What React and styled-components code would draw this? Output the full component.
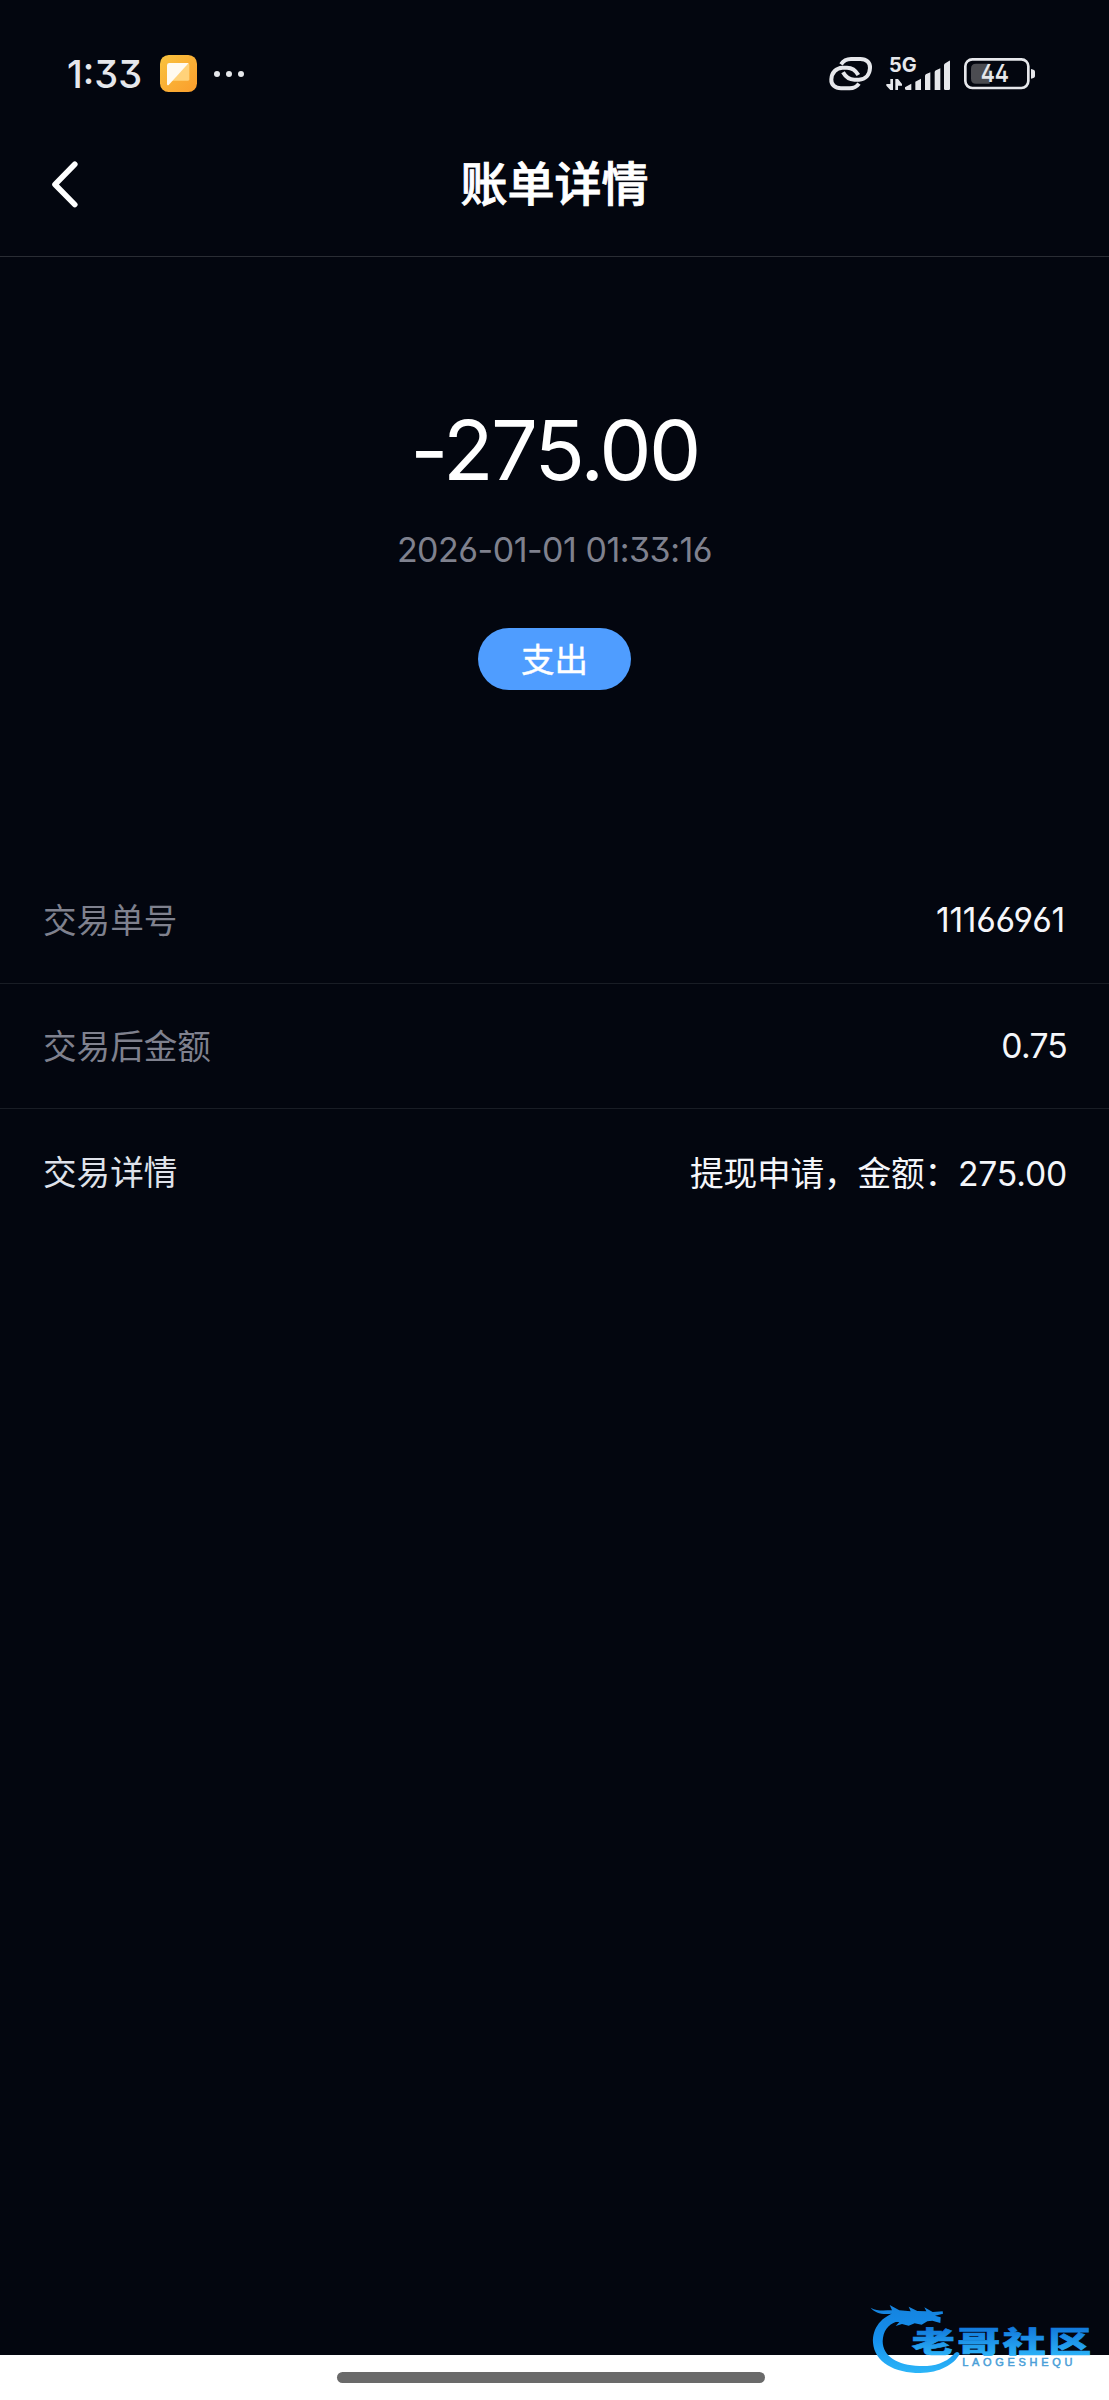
import styled, { createGlobalStyle } from 'styled-components';

const rows = [
  { label: '交易单号', value: '11166961', spacing: '-0.3px', inset: '2px' },
  { label: '交易后金额', value: '0.75', spacing: '-0.8px' },
  { label: '交易详情', value: '提现申请，金额：275.00', spacing: '-0.2px', active: true },
];

const AppIcon = () => (
  <svg width="37" height="37" viewBox="0 0 111 111">
    <defs>
      <linearGradient id="app-bg" x1="0" y1="0" x2="1" y2="1">
        <stop offset="0" stopColor="#f9c33f" />
        <stop offset="1" stopColor="#fb9d2c" />
      </linearGradient>
    </defs>
    <rect width="111" height="111" rx="26" fill="url(#app-bg)" />
    <path d="M28 24h54q6 0 6 6v43q0 4-4 4H36z" fill="#ffd27a" />
    <path d="M28 24h58L26 90q-5 3-5-4V31q0-7 7-7z" fill="#fffaf0" />
  </svg>
);

const LinkIcon = () => (
  <svg width="44" height="34" viewBox="0 0 132 102" fill="none" stroke="#e6e7eb" strokeWidth="12">
    <path d="M36 22C44 10 54 6 66 6H94C113 6 124 17 123 33C122 54 109 67 90 68H76C62 68 50 60 42 46" />
    <path d="M90 80C82 91 73 94 62 94H36C18 94 6 83 7 67C8 46 22 33 40 32H54C68 32 80 40 88 54" />
  </svg>
);

const SignalIcon = () => (
  <svg width="65" height="48" viewBox="0 -18 195 144" fill="#e6e7eb">
    <text x="9" y="48" fontFamily="Inter" fontSize="60" fontWeight="700" textLength="83" lengthAdjust="spacingAndGlyphs">5G</text>
    <path d="M13 69h8v33h-8L1 89v-5h12zM28 69h8l12 15v5H36v13h-8z" />
    <path d="M57 94l19-11v19H62q-5 0-5-4z" />
    <path d="M88 77l17-9v34H88zM117 60q0-4 4-6l12-5v53h-16zM146 49q0-4 4-6l13-6v65h-17zM174 28q0-4 4-6l12-8q2-1 2 3v81q0 4-4 4h-10q-4 0-4-4z" />
  </svg>
);

const BatteryIcon = () => (
  <svg width="72" height="32" viewBox="0 0 216 96">
    <rect x="4" y="4" width="189" height="86" rx="21" fill="none" stroke="#e6e7eb" strokeWidth="8" />
    <path d="M36 17h41v60H36q-15 0-15-15V32q0-15 15-15z" fill="#4b4c51" />
    <path d="M201 33q12 2 12 8v13q0 6-12 8z" fill="#e6e7eb" />
    <text x="50" y="73" fill="#e6e7eb" fontFamily="Inter" fontSize="73" fontWeight="600" textLength="85" lengthAdjust="spacingAndGlyphs">44</text>
  </svg>
);

const BackIcon = () => (
  <svg width="28" height="48" viewBox="0 0 28 48" fill="none" stroke="#fff" strokeWidth="5.6" strokeLinecap="round" strokeLinejoin="round">
    <path d="M23.8 4.3L4 24.5L23.8 44.6" />
  </svg>
);

const Watermark = () => (
  <WatermarkSvg width="259" height="120" viewBox="0 0 777 360">
    <defs>
      <linearGradient id="wm" gradientUnits="userSpaceOnUse" x1="0" y1="80" x2="0" y2="280">
        <stop offset="0" stopColor="#1583df" />
        <stop offset="0.5" stopColor="#1590ee" />
        <stop offset="1" stopColor="#2cb6f8" />
      </linearGradient>
      <linearGradient id="wm-text" gradientUnits="userSpaceOnUse" x1="0" y1="-75" x2="0" y2="7">
        <stop offset="0" stopColor="#1279dc" />
        <stop offset="1" stopColor="#2bb0f6" />
      </linearGradient>
    </defs>
    {/* tail and body */}
    <path
      d="M143 96C94 108 67 144 69 188C74 247 134 279 211 279C269 278 312 254 329 222C325 214 318 213 310 224C285 250 249 260 208 258C143 257 98 228 98 184C99 153 114 133 139 125L175 118L170 97Z"
      fill="url(#wm)"
    />
    {/* head, horns and whiskers */}
    <path
      d="M62 83C82 95 103 91 126 91L119 75L148 91L182 94L176 80L202 93L229 94L223 82L248 96L278 94L279 101L255 107L272 112L271 129L247 122L232 124L215 134L194 130L176 137L156 132L137 138L148 126L125 125L137 115L113 110L125 101C96 105 74 98 62 83Z"
      fill="url(#wm)"
    />
    <g transform="translate(185 218) scale(1.48 1)">
      <text x="0" y="0" fill="url(#wm-text)" stroke="url(#wm-text)" strokeWidth="2" fontFamily="'Noto Sans CJK SC', sans-serif" fontWeight="900" fontSize="87" textLength="364">老哥社区</text>
    </g>
    <text x="337" y="259" fill="#4b9fd8" stroke="#4b9fd8" strokeWidth="1.5" fontFamily="'Liberation Sans', sans-serif" fontSize="33" textLength="330">LAOGESHEQU</text>
  </WatermarkSvg>
);

const App = () => {
  return (
    <>
      <GlobalStyle />
      <Screen>
        <StatusBar>
          <StatusGroup>
            <Time>1:33</Time>
            <AppIcon />
            <Dots><i /><i /><i /></Dots>
          </StatusGroup>
          <StatusIcons>
            <LinkIcon />
            <SignalIcon />
            <BatteryIcon />
          </StatusIcons>
        </StatusBar>
        <Header>
          <BackButton aria-label="返回"><BackIcon /></BackButton>
          <Title>账单详情</Title>
        </Header>
        <Summary>
          <Amount>-275.00</Amount>
          <DateText>2026-01-01 01:33:16</DateText>
          <Tag>支出</Tag>
        </Summary>
        <List>
          {rows.map((row) => (
            <Row key={row.label}>
              <Label $active={row.active}>{row.label}</Label>
              <Value $spacing={row.spacing} $inset={row.inset}>{row.value}</Value>
            </Row>
          ))}
        </List>
        <HomeBar><Handle /></HomeBar>
        <Watermark />
      </Screen>
    </>
  )
}

export default App

//styling
const GlobalStyle = createGlobalStyle`
* {
  box-sizing: border-box;
}
body {
  margin: 0;
  background-color: #03060f;
}
`

const Screen = styled.div`
position: relative;
display: flex;
flex-direction: column;
width: 1109px;
height: 2400px;
background-color: #03060f;
color: white;
font-family: Inter, 'Noto Sans CJK SC', sans-serif;
font-feature-settings: 'ss01';
white-space: nowrap;
`

const StatusBar = styled.div`
display: flex;
justify-content: space-between;
height: 112px;
padding: 36px 73px 0 67px;
`

const StatusGroup = styled.div`
display: flex;
align-items: center;
height: 75px;
`

const StatusIcons = styled(StatusGroup)`
gap: 13px;
`

const Time = styled.span`
width: 93px;
color: #e6e7eb;
font-size: 38px;
font-weight: 500;
`

const Dots = styled.span`
display: flex;
gap: 6px;
margin-left: 17px;

i {
  width: 6px;
  height: 6px;
  border-radius: 50%;
  background-color: #e6e7eb;
}
`

const Header = styled.header`
display: grid;
grid-template-columns: 120px 1fr 120px;
align-items: center;
height: 145px;
border-bottom: 1px solid #2a2d34;
`

const BackButton = styled.button`
display: flex;
padding: 0 0 0 51px;
border: 0;
background: none;
`

const Title = styled.h1`
margin: 0;
font-size: 47px;
font-weight: 500;
line-height: 70px;
text-align: center;
-webkit-text-stroke: 0.9px white;
`

const Summary = styled.section`
display: flex;
flex-direction: column;
align-items: center;
height: 601px;
padding-top: 143px;
`

const Amount = styled.div`
font-size: 83px;
letter-spacing: -2.6px;
line-height: 100px;
`

const DateText = styled.div`
margin-top: 29px;
color: #7f818e;
font-size: 34px;
letter-spacing: -0.5px;
line-height: 42px;
`

const Tag = styled.span`
display: flex;
align-items: center;
justify-content: center;
width: 153px;
height: 62px;
margin-top: 57px;
padding-bottom: 4px;
border-radius: 31px;
background-color: #4f9dff;
font-size: 33.5px;
-webkit-text-stroke: 0.4px white;
`

const List = styled.div`
flex: 1;
`

const Row = styled.div`
display: flex;
align-items: center;
justify-content: space-between;
height: 125.5px;
padding: 0 42px 0 43px;
border-bottom: 1px solid #191d25;

&:last-child {
  border-bottom: 0;
}
`

const Label = styled.span`
padding-bottom: 3px;
color: ${({ $active }) => ($active ? '#dfe2ea' : '#7f818e')};
font-size: 33.6px;
`

const Value = styled.span`
padding-right: ${({ $inset }) => $inset || 0};
padding-bottom: 1px;
color: #f5f6fa;
font-size: 33.7px;
letter-spacing: ${({ $spacing }) => $spacing};
`

const HomeBar = styled.div`
display: flex;
justify-content: center;
height: 45px;
padding: 17px 7px 0 0;
background-color: white;
`

const Handle = styled.div`
width: 428px;
height: 11px;
border-radius: 6px;
background-color: #6a6a6a;
`

const WatermarkSvg = styled.svg`
position: absolute;
right: 0;
bottom: 0;
`
